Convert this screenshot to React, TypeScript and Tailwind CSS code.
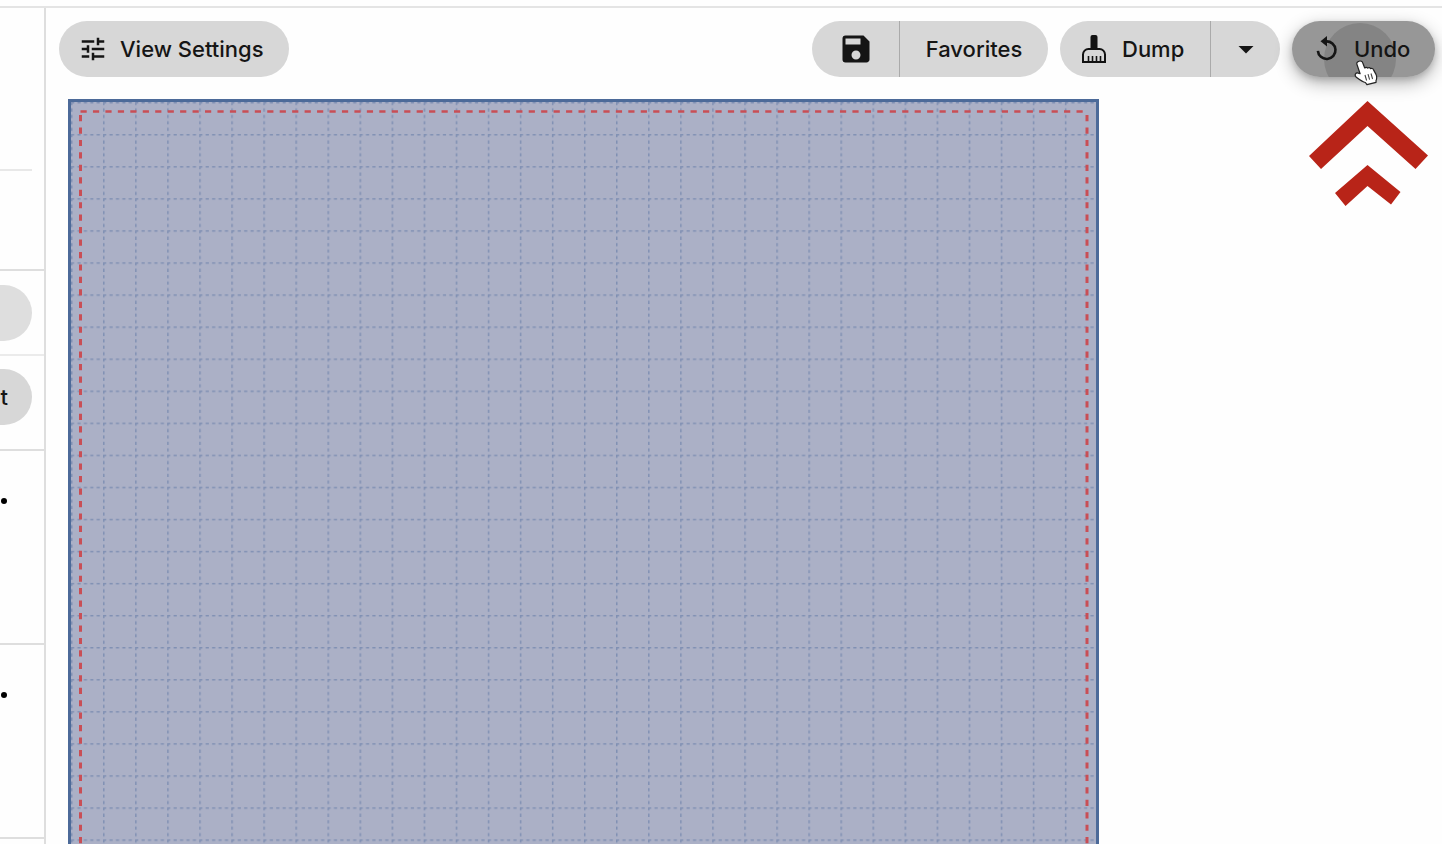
import React from "react";
import { MdArrowDropDown, MdSave, MdTune } from "react-icons/md";

const CELL = 32.06;

const sections = ["first", "second"];

function BrushIcon() {
  return (
    <svg viewBox="0 0 24 28" className="h-7 w-6" fill="none" stroke="#111" strokeWidth="2">
      <rect x="8.5" y="0" width="7" height="15" rx="2" fill="#111" stroke="none" />
      <path d="M1 27v-7.500a5.500 5.500 0 0 1 5.500-5.500h11a5.500 5.500 0 0 1 5.500 5.500V27z" />
      <path d="M6.500 27v-6M10.500 27v-6M14.500 27v-6M18.500 27v-6" strokeWidth="1.6" />
    </svg>
  );
}

function UndoIcon() {
  return (
    <svg viewBox="0 0 24 26" className="h-[26px] w-6" fill="none">
      <path d="M1.900 14.800A8.800 8.800 0 1 0 10 5.400" stroke="#151515" strokeWidth="2.6" />
      <path d="M4.500 5.200 11 0v10.400z" fill="#151515" />
    </svg>
  );
}

function HandCursor() {
  return (
    <svg viewBox="0 0 24 26" className="pointer-events-none absolute left-[62px] top-[39px] h-[26px] w-6">
      <path
        d="M5 1.200C6.700.6 8.300 1.400 8.800 3l1.900 5c.8-.9 2.300-.9 3 .1.900-.8 2.300-.6 2.900.5 1.100-.6 2.300-.1 2.800 1l2.600 4.800c1 2.500.9 4.500 0 6.400l.1 1.500-9.200 2.300-1.500-2.100c-3-.7-5.600-2.700-9.300-5.500-2-2-.4-4.700 2.100-3.900l1.900.6L2.900 4.300C2.400 2.900 3.500 1.700 5 1.200z"
        fill="#fff"
        stroke="#222"
        strokeWidth="1.2"
        strokeLinejoin="round"
      />
      <path d="M11 15l1.600 5.500M14 14.200l1.600 5.500M17 13.500l1.600 5.500" stroke="#444" strokeWidth="1.1" />
    </svg>
  );
}

function Chevrons() {
  return (
    <svg viewBox="0 0 120 106" className="pointer-events-none absolute left-4 top-20 h-[106px] w-[120px]" fill="#b82418">
      <path d="M59.500 0 120 54.500 107.500 68 59.500 25 13 68 1 55z" />
      <path d="M59.500 64 92.500 91 83 103.500 59.500 85 37.500 105 27 92z" />
    </svg>
  );
}

function Toolbar() {
  return (
    <div className="flex items-center gap-3 pl-[13px] pr-[7px] pt-[13px]">
      <button className="flex h-14 w-[230px] items-center gap-3 rounded-full bg-[#d7d7d7] pl-[19px]">
        <MdTune className="size-[30px]" />
        View Settings
      </button>
      <div className="ml-auto flex h-14 divide-x divide-[#aaa] overflow-hidden rounded-full bg-[#d7d7d7]">
        <button aria-label="Save" className="flex w-[88px] items-center justify-center">
          <MdSave className="size-9" />
        </button>
        <button className="w-[148px]">Favorites</button>
      </div>
      <div className="flex h-14 divide-x divide-[#aaa] overflow-hidden rounded-full bg-[#d7d7d7]">
        <button className="flex w-[151px] items-center gap-4 pl-[22px]">
          <BrushIcon />
          Dump
        </button>
        <button aria-label="Dump options" className="flex w-[69px] items-center justify-center">
          <MdArrowDropDown className="size-9" />
        </button>
      </div>
      <div className="relative">
        <button className="relative flex h-14 w-[143px] items-center gap-3.5 overflow-hidden rounded-full bg-[#979797] pl-6">
          <span className="absolute left-8 top-0.5 size-[72px] rounded-full bg-[#848484]" />
          <span className="relative"><UndoIcon /></span>
          <span className="relative">Undo</span>
        </button>
        <div className="pointer-events-none absolute inset-0 rounded-full shadow-[0_6px_18px_rgba(0,0,0,0.3),0_3px_6px_rgba(0,0,0,0.15)]" />
        <HandCursor />
        <Chevrons />
      </div>
    </div>
  );
}

function Sheet() {
  return (
    <svg className="ml-[22px] mt-[22px] min-h-0 w-[1031px] max-w-full flex-1" role="img" aria-label="Work area">
      <defs>
        <pattern id="grid" x="3" y="3" width={CELL} height={CELL} patternUnits="userSpaceOnUse">
          <path d={`M0 .75H${CELL}M.75 0V${CELL}`} stroke="#8090b3" strokeWidth="1.5" strokeDasharray="3.206 3.206" />
        </pattern>
      </defs>
      <rect width="100%" height="100%" fill="#abb0c6" />
      <rect width="100%" height="100%" fill="url(#grid)" />
      <path d="M1.500 2000V1.500H1029.500V2000" fill="none" stroke="#4c6a99" strokeWidth="3" />
      <path d="M12.500 16V2000M1019 16V2000" stroke="#c94e55" strokeWidth="3" strokeDasharray="6.200 6.250" />
      <path d="M12.500 12.500H1019" stroke="#c94e55" strokeWidth="2.5" strokeDasharray="6.200 6.250" />
    </svg>
  );
}

export default function App() {
  return (
    <div className="flex h-screen flex-col overflow-hidden bg-[#fefefe] font-['Inter',sans-serif] text-[22px] font-medium text-[#151515]">
      <div className="h-2 shrink-0 border-b-2 border-[#e4e4e4]" />
      <div className="flex min-h-0 flex-1">
        {/* Side panel */}
        <aside className="w-[46px] shrink-0 overflow-hidden border-r-2 border-[#dedede]">
          <div className="mr-3 h-[163px] border-b-2 border-[#e8e8e8]" />
          <div className="h-[100px] border-b-2 border-[#dedede]" />
          <div className="flex h-[85px] items-center border-b-2 border-[#ebebeb]">
            <button aria-label="Panel action" className="h-14 w-8 rounded-r-full bg-[#dedede]" />
          </div>
          <div className="h-[95px] border-b-2 border-[#dedede] pt-[13px]">
            <button className="h-14 w-8 rounded-r-full bg-[#d7d7d7] pr-6 text-right">t</button>
          </div>
          {sections.map((id) => (
            <div key={id} className="h-[194px] border-b-2 border-[#dedede] pt-[47px]">
              <div className="ml-px size-1.5 rounded-full bg-black" />
            </div>
          ))}
        </aside>

        {/* Main area */}
        <main className="flex min-w-0 flex-1 flex-col">
          <Toolbar />
          <Sheet />
        </main>
      </div>
    </div>
  );
}
